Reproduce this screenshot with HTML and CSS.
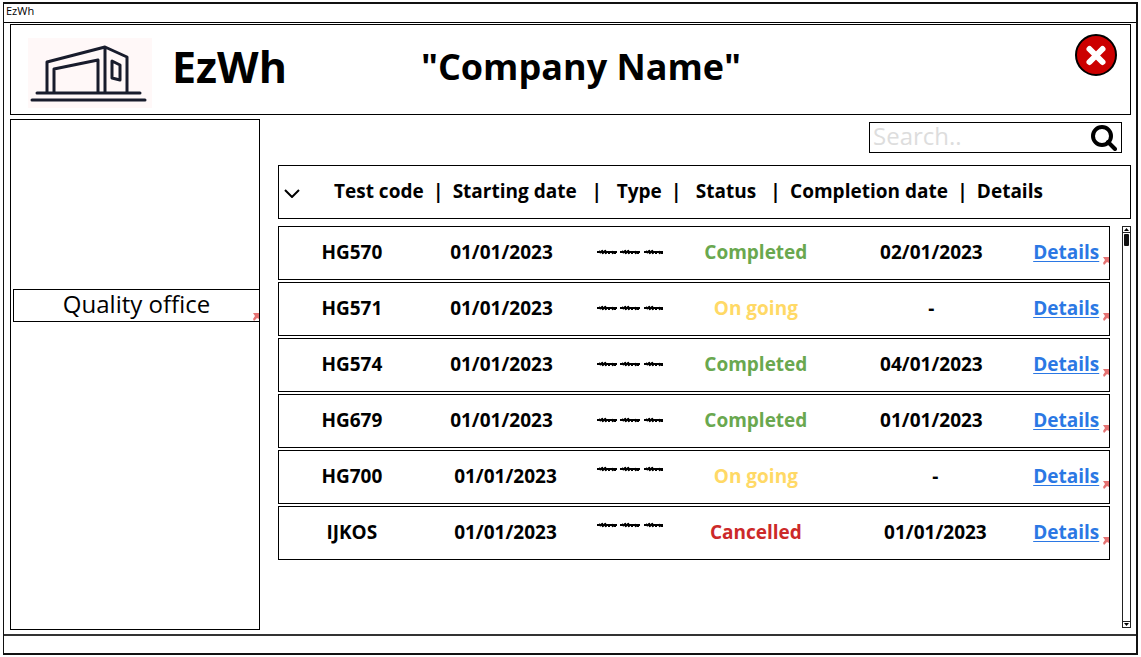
FILE: index.html
```html
<!DOCTYPE html>
<html lang="en">
<head>
<meta charset="utf-8">
<title>EzWh</title>
<link rel="stylesheet" href="styles.css">
</head>
<body>
<svg class="sprite" aria-hidden="true">
  <symbol id="arrow" viewBox="0 0 6 8"><path d="M0 0h6v6L4 5 1 8 0 6l2-3z"/></symbol>
  <symbol id="scribble" viewBox="0 0 68 6">
    <path d="M1 3h20M24 3h20M48 3h19M3 2l2 2M6 1l1 4M9 1l1 4M13 2v3M16 2l1 3M19 2v3M26 2l2 2M29 1l1 4M32 1l1 4M36 2v3M39 2l1 3M42 2v3M50 2l2 2M53 1l1 4M56 1l1 4M60 2v3M63 2l1 3M66 2v3"/>
  </symbol>
</svg>
<div class="window">
  <div class="titlebar">EzWh</div>
  <div class="content">
    <header class="banner">
      <svg class="logo" viewBox="0 0 124 70" aria-hidden="true">
        <path class="logo-walls" d="M19 54V24L77 9l22 10v35M77 9v45M26 54V31l44-9v32M84 23l8 4v15l-8-2z"/>
        <path class="logo-ground" d="M9 55h103M4 62h113"/>
      </svg>
      <h1 class="brand">EzWh</h1>
      <p class="company">"Company Name"</p>
      <button class="close" type="button" aria-label="Close">
        <svg viewBox="0 0 42 42" aria-hidden="true"><circle cx="21" cy="21" r="20"/><path d="M14.500 15l13 13M27.500 15l-13 13"/></svg>
      </button>
    </header>
    <div class="columns">
      <nav class="sidebar">
        <a class="nav-item" href="#quality">Quality office<svg class="arrow"><use href="#arrow"/></svg></a>
      </nav>
      <main class="main">
        <form class="search">
          <input class="search-input" type="text" placeholder="Search.." aria-label="Search">
          <button class="search-button" type="button" aria-label="Search">
            <svg viewBox="0 0 26 26" aria-hidden="true"><circle cx="11" cy="11" r="9"/><path d="M17 17l7 7"/></svg>
          </button>
        </form>
        <table class="tests">
          <thead class="head">
            <tr class="head-row">
              <th class="head-cell head-toggle"><button class="toggle" type="button" aria-label="Collapse"><svg viewBox="0 0 16 9" aria-hidden="true"><path d="M1 1l7 7 7-7"/></svg></button></th>
              <th class="head-cell">Test code</th>
              <th class="head-cell head-bar">|</th>
              <th class="head-cell">Starting date</th>
              <th class="head-cell head-bar head-bar-wide">|</th>
              <th class="head-cell">Type</th>
              <th class="head-cell head-bar">|</th>
              <th class="head-cell head-status">Status</th>
              <th class="head-cell head-bar">|</th>
              <th class="head-cell">Completion date</th>
              <th class="head-cell head-bar">|</th>
              <th class="head-cell">Details</th>
            </tr>
          </thead>
          <tbody class="body">
            <tr class="row"><td>HG570</td><td>01/01/2023</td><td><svg class="scribble"><use href="#scribble"/></svg></td><td class="completed">Completed</td><td>02/01/2023</td><td class="action"><a href="#HG570">Details</a><svg class="arrow"><use href="#arrow"/></svg></td></tr>
            <tr class="row"><td>HG571</td><td>01/01/2023</td><td><svg class="scribble"><use href="#scribble"/></svg></td><td class="ongoing">On going</td><td>-</td><td class="action"><a href="#HG571">Details</a><svg class="arrow"><use href="#arrow"/></svg></td></tr>
            <tr class="row"><td>HG574</td><td>01/01/2023</td><td><svg class="scribble"><use href="#scribble"/></svg></td><td class="completed">Completed</td><td>04/01/2023</td><td class="action"><a href="#HG574">Details</a><svg class="arrow"><use href="#arrow"/></svg></td></tr>
            <tr class="row"><td>HG679</td><td>01/01/2023</td><td><svg class="scribble"><use href="#scribble"/></svg></td><td class="completed">Completed</td><td>01/01/2023</td><td class="action"><a href="#HG679">Details</a><svg class="arrow"><use href="#arrow"/></svg></td></tr>
            <tr class="row row-late"><td>HG700</td><td class="date">01/01/2023</td><td><svg class="scribble"><use href="#scribble"/></svg></td><td class="ongoing">On going</td><td class="date">-</td><td class="action"><a href="#HG700">Details</a><svg class="arrow"><use href="#arrow"/></svg></td></tr>
            <tr class="row row-late"><td>IJKOS</td><td class="date">01/01/2023</td><td><svg class="scribble"><use href="#scribble"/></svg></td><td class="cancelled">Cancelled</td><td class="date">01/01/2023</td><td class="action"><a href="#IJKOS">Details</a><svg class="arrow"><use href="#arrow"/></svg></td></tr>
          </tbody>
        </table>
        <div class="scrollbar" aria-hidden="true">
          <svg class="scroll-end" viewBox="0 0 7 5"><path d="M1 4l2.500-3L6 4z"/></svg>
          <div class="track"><div class="thumb"></div></div>
          <svg class="scroll-end" viewBox="0 0 7 5"><path d="M1 1h5L3.500 4z"/></svg>
        </div>
      </main>
    </div>
  </div>
  <footer class="statusbar"></footer>
</div>
</body>
</html>
```
FILE: styles.css
```css
* { box-sizing: border-box; }
body {
  margin: 0;
  padding: 2px 3px;
  height: 100vh;
  background: #fff;
  color: #000;
  font-family: "Open Sans", "Noto Sans", sans-serif;
}
h1, p { margin: 0; }
button { padding: 0; border: 0; background: none; cursor: pointer; }
svg { display: block; }
.sprite { display: none; }

.window {
  display: flex;
  flex-direction: column;
  min-height: 100%;
  border: 2px solid #111;
  border-left-width: 1px;
}
.titlebar {
  height: 19px;
  padding-left: 2px;
  border-bottom: 1px solid #000;
  font-size: 11px;
  line-height: 14px;
}
.content {
  flex: 1;
  display: flex;
  flex-direction: column;
  gap: 4px;
  padding: 1px 5px 4px 6px;
}
.statusbar { height: 19px; border-top: 2px solid #333; }

.banner {
  display: flex;
  align-items: flex-start;
  height: 91px;
  padding: 9px 13px 0 17px;
  border: 1px solid #000;
}
.logo {
  width: 124px;
  height: 70px;
  margin-top: 4px;
  background: #fff8f8;
  fill: none;
  stroke: #181c2c;
  stroke-width: 3;
  stroke-linecap: round;
  stroke-linejoin: round;
}
.brand { margin-left: 20px; font-size: 43px; line-height: 66px; }
.company { margin-left: 134px; font-size: 36px; font-weight: 700; line-height: 66px; }
.close { width: 42px; height: 42px; margin-left: auto; }
.close circle { fill: #c00; stroke: #000; stroke-width: 2; }
.close path { stroke: #fff; stroke-width: 6; stroke-linecap: round; }

.columns { flex: 1; display: flex; gap: 18px; }
.sidebar {
  width: 250px;
  padding: 169px 0 0 2px;
  border: 1px solid #000;
}
.nav-item {
  display: block;
  position: relative;
  height: 33px;
  border: 1px solid #000;
  border-right: 0;
  color: #000;
  font-size: 24px;
  line-height: 27px;
  text-align: center;
  text-decoration: none;
}
.arrow {
  position: absolute;
  right: 0;
  bottom: 0;
  width: 6px;
  height: 8px;
  fill: #e57373;
}

.main {
  flex: 1;
  display: grid;
  grid-template-columns: 1fr 9px;
  grid-template-rows: 31px 66px 1fr;
  column-gap: 12px;
  padding: 3px 0 2px;
}
.search {
  grid-column: 1 / 3;
  justify-self: end;
  display: flex;
  align-items: center;
  width: 253px;
  height: 31px;
  margin-right: 9px;
  padding: 0 4px 0 1px;
  border: 1px solid #000;
}
.search-input {
  flex: 1;
  min-width: 0;
  height: 29px;
  padding: 0 2px 4px;
  border: 0;
  background: none;
  font: 24px "Open Sans", sans-serif;
}
.search-input::placeholder { color: #ddd; }
.search-button { width: 26px; height: 26px; }
.search-button svg { fill: none; stroke: #000; stroke-width: 4; stroke-linecap: round; }

.tests { display: contents; font-size: 19px; line-height: 26px; }
.head { display: block; grid-column: 1 / 3; margin-top: 12px; }
.head-row {
  display: flex;
  align-items: center;
  height: 54px;
  padding-bottom: 2px;
  border: 1px solid #000;
}
.head-cell { padding: 0; font-size: 19px; white-space: nowrap; }
.head-toggle { width: 55px; padding: 4px 0 0 5px; }
.toggle { display: block; width: 16px; height: 9px; }
.toggle svg { fill: none; stroke: #000; stroke-width: 2; }
.head-bar { width: 29px; }
.head-bar-wide { width: 40px; }
.head-status { padding: 0 5px; }

.body {
  display: flex;
  flex-direction: column;
  gap: 2px;
  margin-top: 7px;
}
.row {
  position: relative;
  display: grid;
  grid-template-columns: 146fr 154fr 104fr 148fr 204fr 76fr;
  align-items: center;
  height: 54px;
  padding-bottom: 2px;
  border: 1px solid #000;
  font-weight: 700;
  text-align: center;
}
.row td { padding: 0; }
.row .date { padding-left: 8px; }
.scribble { width: 68px; height: 6px; margin: 0 auto; fill: none; stroke: #000; stroke-width: 2; }
.row-late .scribble { margin-bottom: 14px; }
.completed { color: #6aa84f; }
.ongoing { color: #ffd966; }
.cancelled { color: #cc2929; }
.row .action { text-align: left; }
.action a { color: #2b78e4; text-underline-offset: 2px; }
.row .arrow { bottom: 14px; }

.scrollbar {
  display: flex;
  flex-direction: column;
  margin-top: 7px;
  border: 1px solid #222;
}
.scroll-end { width: 7px; height: 5px; }
.track { flex: 1; border: solid #222; border-width: 1px 0; }
.thumb { width: 5px; height: 12px; margin: 1px; border-radius: 1px; background: #111; }
```
